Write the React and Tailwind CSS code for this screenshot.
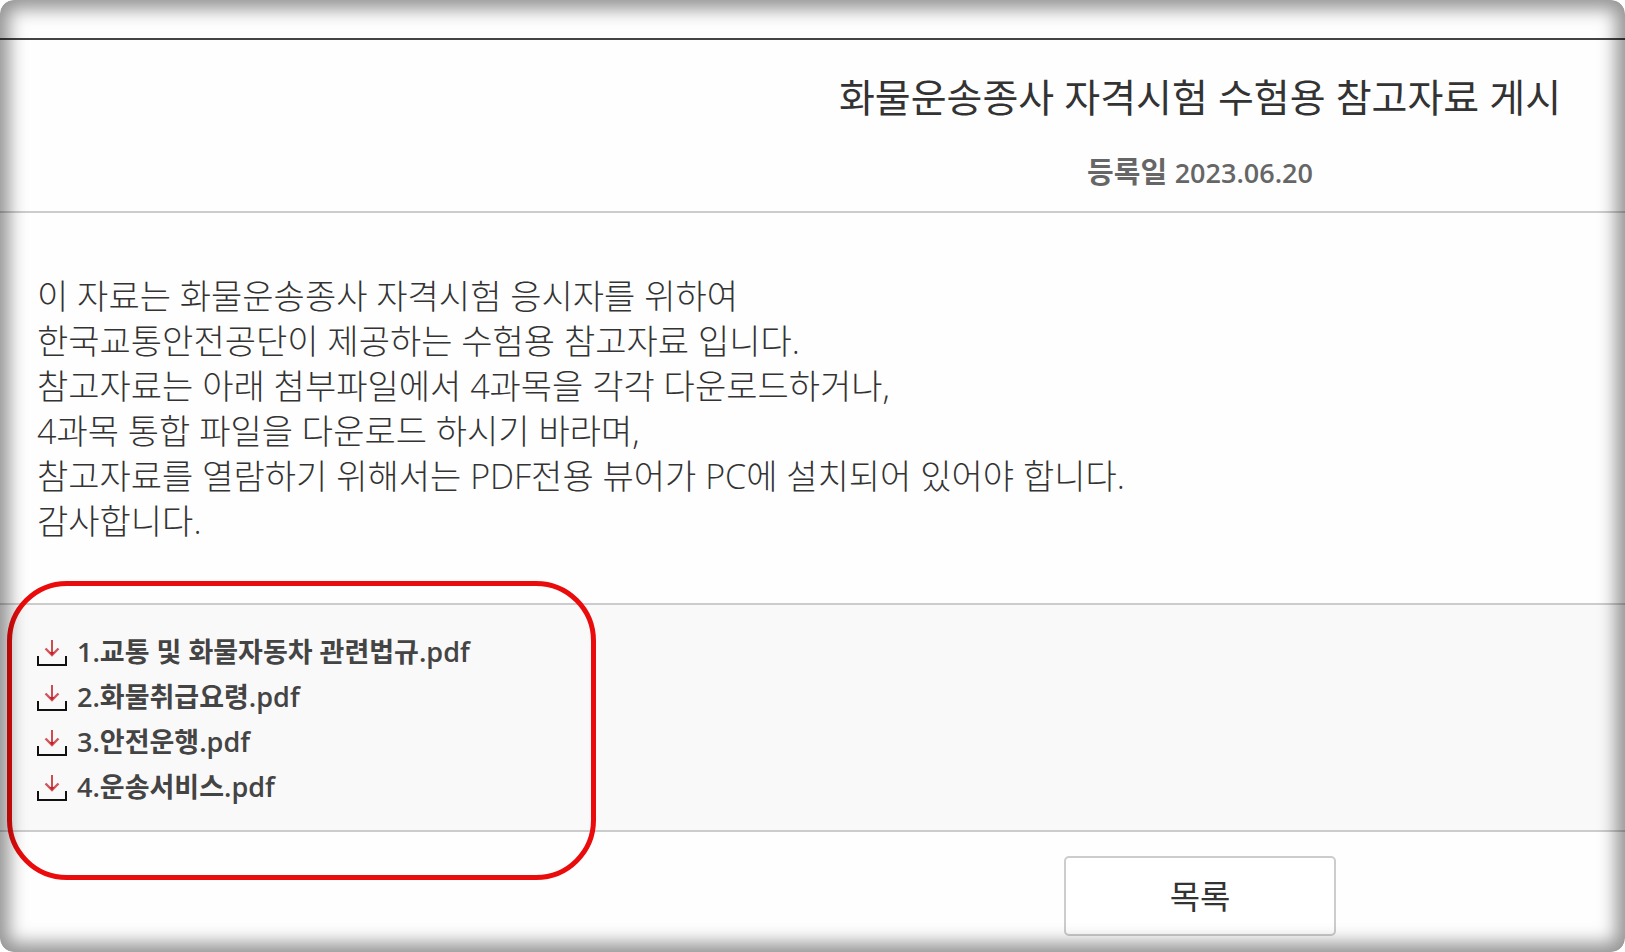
const files = [
  '1.교통 및 화물자동차 관련법규.pdf',
  '2.화물취급요령.pdf',
  '3.안전운행.pdf',
  '4.운송서비스.pdf',
]

const lines = [
  '이 자료는 화물운송종사 자격시험 응시자를 위하여',
  '한국교통안전공단이 제공하는 수험용 참고자료 입니다.',
  '참고자료는 아래 첨부파일에서 4과목을 각각 다운로드하거나,',
  '4과목 통합 파일을 다운로드 하시기 바라며,',
  '참고자료를 열람하기 위해서는 PDF전용 뷰어가 PC에 설치되어 있어야 합니다.',
  '감사합니다.',
]

function DownloadIcon() {
  return (
    <svg width="30" height="30" viewBox="0 0 30 30" fill="none" className="shrink-0" aria-hidden="true">
      <path d="M15 3v15" stroke="#cc4c50" strokeWidth="2" />
      <path d="M8.5 11.5L15 18l6.5-6.5" stroke="#d0575b" strokeWidth="2.4" />
      <path d="M12.5 15h5L15 18.6z" fill="#c8202a" />
      <path d="M1 19v9h28v-9" stroke="#111" strokeWidth="2" />
    </svg>
  )
}

export default function App() {
  return (
    <div className="bg-white">
      <div className="relative min-h-screen overflow-hidden rounded-[14px] bg-[#fefefe] pt-[38px] font-['Open_Sans','Noto_Sans_CJK_KR',sans-serif] text-[#333]">
        {/* Title */}
        <header className="border-t-2 border-b-2 border-t-[#444] border-b-[#ccc] pt-7 pb-4 pl-[775px] text-center">
          <h1 className="text-[39px] leading-[58px] whitespace-nowrap">화물운송종사 자격시험 수험용 참고자료 게시</h1>
          <p className="mt-6 text-[29px] leading-[44px] font-semibold text-[#666]">
            등록일 <time dateTime="2023-06-20" className="text-[27px]">2023.06.20</time>
          </p>
        </header>

        {/* Notice text */}
        <div className="px-[37px] pt-[61px] pb-[59px] text-[34px] leading-[45px] font-light">
          {lines.map((line) => (
            <p key={line}>{line}</p>
          ))}
        </div>

        {/* Attachments */}
        <section className="relative border-y-2 border-[#ccc] bg-[#f9f9f9] px-[37px] pt-6 pb-[21px]">
          <ul>
            {files.map((file) => (
              <li key={file} className="flex">
                <a href="#" className="flex items-center gap-[10px] text-[27px] leading-[45px] font-semibold text-[#444]">
                  <DownloadIcon />
                  {file}
                </a>
              </li>
            ))}
          </ul>
          <div className="pointer-events-none absolute -top-6 left-[7px] h-[299px] w-[589px] rounded-[60px] border-5 border-[#ea0c0c]" />
        </section>

        <div className="flex justify-center pt-6 pb-4 pl-[775px]">
          <button type="button" className="w-[272px] rounded-[5px] border-2 border-[#ccc] bg-white pt-[2px] text-[33px] leading-[74px]">
            목록
          </button>
        </div>

        {/* Edge shading */}
        <div className="pointer-events-none absolute inset-0 rounded-[14px] shadow-[inset_0_0_18px_9px_rgba(0,0,0,0.42)]" />
      </div>
    </div>
  )
}
